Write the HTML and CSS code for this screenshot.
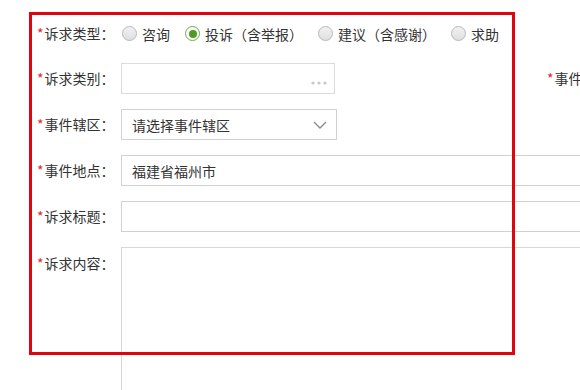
FILE: index.html
```html
<!DOCTYPE html>
<html lang="zh-CN">
<head>
    <meta charset="UTF-8">
    <title>诉求登记</title>
    <link rel="stylesheet" href="styles.css">
</head>
<body>
    <form class="appeal-form">
        <!-- 诉求类型 -->
        <div class="form-row">
            <label class="form-label"><i>*</i>诉求类型：</label>
            <div class="radio-group">
                <span class="radio-item"><span class="radio"></span>咨询</span>
                <span class="radio-item"><span class="radio checked"></span>投诉（含举报）</span>
                <span class="radio-item"><span class="radio"></span>建议（含感谢）</span>
                <span class="radio-item"><span class="radio"></span>求助</span>
            </div>
        </div>

        <!-- 诉求类别 -->
        <div class="form-row">
            <label class="form-label"><i>*</i>诉求类别：</label>
            <div class="picker">
                <span class="dots">
                    <svg width="16" height="4" viewBox="0 0 16 4"><circle cx="2" cy="2" r="1.6" fill="#c8c8c8"/><circle cx="8" cy="2" r="1.6" fill="#c8c8c8"/><circle cx="14" cy="2" r="1.6" fill="#c8c8c8"/></svg>
                </span>
            </div>
            <label class="form-label side-label"><i>*</i>事件类型：</label>
        </div>

        <!-- 事件辖区 -->
        <div class="form-row">
            <label class="form-label"><i>*</i>事件辖区：</label>
            <div class="select">
                <span>请选择事件辖区</span>
                <svg width="14" height="8" viewBox="0 0 14 8"><path d="M1 1 L7 7 L13 1" fill="none" stroke="#888" stroke-width="1.3"/></svg>
            </div>
        </div>

        <!-- 事件地点 -->
        <div class="form-row">
            <label class="form-label"><i>*</i>事件地点：</label>
            <input class="text-input" type="text" value="福建省福州市">
        </div>

        <!-- 诉求标题 -->
        <div class="form-row">
            <label class="form-label"><i>*</i>诉求标题：</label>
            <input class="text-input" type="text">
        </div>

        <!-- 诉求内容 -->
        <div class="form-row top">
            <label class="form-label"><i>*</i>诉求内容：</label>
            <textarea class="text-area"></textarea>
        </div>
    </form>

    <div class="highlight-box"></div>
</body>
</html>
```

FILE: styles.css
```css
body {
    margin: 0;
    padding: 0;
    background: #fff;
    font-family: "Noto Sans CJK SC", "Microsoft YaHei", sans-serif;
    font-size: 14px;
    color: #333;
    overflow: hidden;
    width: 580px;
    height: 390px;
}
.appeal-form {
    padding: 18px 0 0 37px;
}
.form-row {
    display: flex;
    align-items: center;
    height: 31px;
    margin-bottom: 15px;
    white-space: nowrap;
}
.form-row:first-child {
    margin-bottom: 14px;
}
.form-row.top {
    align-items: flex-start;
    height: auto;
    margin-bottom: 0;
}
.form-label {
    width: 84px;
    flex-shrink: 0;
    line-height: 31px;
    color: #333;
}
.form-label i {
    font-style: normal;
    color: #e2252b;
    margin-right: 1px;
}
.top .form-label {
    line-height: 32px;
}
.side-label {
    margin-left: 212px;
}
.radio-group {
    display: flex;
    align-items: center;
    margin-left: 1px;
}
.radio-item {
    display: flex;
    align-items: center;
    margin-right: 15px;
}
.radio {
    width: 15px;
    height: 15px;
    box-sizing: border-box;
    border-radius: 50%;
    border: 1px solid #b8b8b8;
    background: linear-gradient(#f2f2f2, #dedede);
    margin-right: 5px;
    position: relative;
}
.radio.checked {
    border-color: #6fae3c;
    background: #fff;
}
.radio.checked::after {
    content: "";
    position: absolute;
    left: 2.5px;
    top: 2.5px;
    width: 8px;
    height: 8px;
    border-radius: 50%;
    background: #4f9c24;
}
.picker, .select {
    height: 31px;
    box-sizing: border-box;
    border: 1px solid #dcdcdc;
    display: flex;
    align-items: center;
    justify-content: flex-end;
    flex-shrink: 0;
}
.picker {
    width: 214px;
    padding-right: 7px;
}
.select {
    width: 216px;
    justify-content: space-between;
    padding: 0 9px 0 10px;
    border-color: #d2d2d2;
}
.text-input {
    width: 620px;
    height: 31px;
    box-sizing: border-box;
    border: 1px solid #d0d0d0;
    padding: 0 10px;
    font-family: inherit;
    font-size: 14px;
    color: #333;
    outline: none;
    flex-shrink: 0;
}
.text-area {
    width: 620px;
    height: 180px;
    box-sizing: border-box;
    border: 1px solid #d8d8d8;
    resize: none;
    outline: none;
    flex-shrink: 0;
}
.highlight-box {
    position: absolute;
    left: 29px;
    top: 12px;
    width: 486px;
    height: 343px;
    box-sizing: border-box;
    border: 3px solid #e0040f;
    pointer-events: none;
}
```
